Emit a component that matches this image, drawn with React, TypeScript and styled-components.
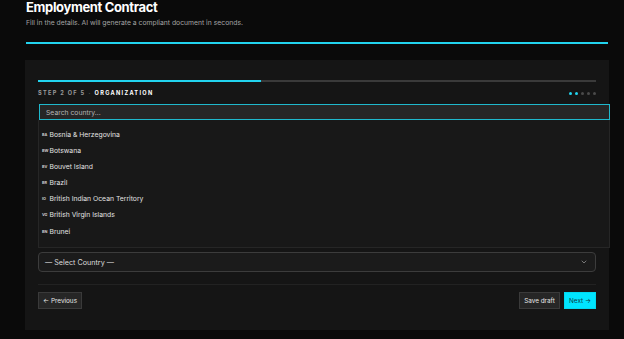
import React from "react";
import styled, { createGlobalStyle } from "styled-components";

const Global = createGlobalStyle`
  html, body { margin: 0; padding: 0; background: #0a0a0a; }
  body { font-family: Inter, "Noto Sans", sans-serif; color: #f2f2f2; }
  * { box-sizing: border-box; }
`;

const Page = styled.div`
  min-height: 339px;
  padding: 0 16px 10px 26px;
  display: flex;
  flex-direction: column;
`;

const Title = styled.h1`
  margin: 0;
  font-size: 13px;
  line-height: 15px;
  font-weight: 700;
  letter-spacing: -0.35px;
  color: #ffffff;
`;

const Subtitle = styled.p`
  margin: 3px 0 0;
  font-size: 6.8px;
  line-height: 9px;
  color: #a3a3a3;
`;

const AccentRule = styled.div`
  margin-top: 15px;
  height: 2px;
  background: #22d3ee;
`;

const Card = styled.section`
  margin: 16px -1px 0;
  background: #151515;
  padding: 20px 13px 21px;
  display: flex;
  flex-direction: column;
`;

const Track = styled.div`
  height: 2px;
  background: #3a3a3a;
  display: flex;
`;

const Fill = styled.div`
  background: #22d3ee;
  height: 100%;
`;

const StepRow = styled.div`
  margin-top: 7px;
  height: 8px;
  display: flex;
  align-items: center;
  justify-content: space-between;
`;

const StepLabel = styled.div`
  font-size: 5.6px;
  font-weight: 700;
  letter-spacing: 1.3px;
  color: #9a9a9a;
  display: flex;
  gap: 3px;
`;

const Strong = styled.span`
  color: #ffffff;
`;

const Dim = styled.span`
  color: #555;
`;

const Dots = styled.div`
  display: flex;
  gap: 3px;
  padding-right: 0.5px;
`;

const Dot = styled.span<{ $on: boolean }>`
  width: 3px;
  height: 3px;
  border-radius: 50%;
  background: ${(p) => (p.$on ? "#22d3ee" : "#4a4a4a")};
`;

const Combo = styled.div`
  margin-top: 7px;
  margin-right: -14px;
  display: flex;
  flex-direction: column;
`;

const Search = styled.input`
  margin-left: 1px;
  height: 16px;
  border: 1px solid #1fb8cc;
  background: #262626;
  color: #eee;
  font-family: inherit;
  font-size: 6.8px;
  padding: 0 6px;
  outline: none;
  &::placeholder { color: #b5b5b5; }
`;

const List = styled.ul`
  list-style: none;
  margin: 0;
  padding: 6px 0 8px;
  background: #181818;
  border: 1px solid #262626;
  border-top: none;
  display: flex;
  flex-direction: column;
`;

const Item = styled.li`
  height: 16.17px;
  display: flex;
  align-items: center;
  gap: 2px;
  padding-left: 3px;
  font-size: 6.8px;
  color: #e2e2e2;
`;

const Code = styled.span`
  font-size: 3.8px;
  font-weight: 700;
  color: #cfcfcf;
  width: 5.5px;
  white-space: nowrap;
  letter-spacing: -0.1px;
`;

const Select = styled.div`
  margin-top: 4px;
  height: 20px;
  border: 1px solid #3c3c3c;
  border-radius: 4px;
  background: #1b1b1b;
  display: flex;
  align-items: center;
  justify-content: space-between;
  padding: 0 7px 0 6px;
  font-size: 7.2px;
  color: #dcdcdc;
`;

const Chevron = styled.svg`
  width: 8px;
  height: 8px;
  color: #8a8a8a;
`;

const Divider = styled.hr`
  margin: 12px 0 0;
  border: none;
  height: 1px;
  background: #222;
`;

const Footer = styled.div`
  margin-top: 7px;
  display: flex;
  align-items: center;
  gap: 4px;
`;

const Spacer = styled.div`
  flex: 1;
`;

const Btn = styled.button<{ $primary?: boolean; $w: number }>`
  width: ${(p) => p.$w}px;
  height: 17px;
  padding: 0;
  font-family: inherit;
  font-size: 6.4px;
  border: 1px solid ${(p) => (p.$primary ? "#00d9f0" : "#3a3a3a")};
  background: ${(p) => (p.$primary ? "#00e5ff" : "#262626")};
  color: ${(p) => (p.$primary ? "#0b3a44" : "#e6e6e6")};
  display: flex;
  align-items: center;
  justify-content: center;
`;

const countries: [string, string][] = [
  ["BA", "Bosnia & Herzegovina"],
  ["BW", "Botswana"],
  ["BV", "Bouvet Island"],
  ["BR", "Brazil"],
  ["IO", "British Indian Ocean Territory"],
  ["VG", "British Virgin Islands"],
  ["BN", "Brunei"],
];

export default function App() {
  return (
    <>
      <Global />
      <Page>
        <Title>Employment Contract</Title>
        <Subtitle>Fill in the details. AI will generate a compliant document in seconds.</Subtitle>
        <AccentRule />
        <Card>
          <Track>
            <Fill style={{ width: `${(2 / 5) * 100}%` }} />
          </Track>
          <StepRow>
            <StepLabel>
              <span>STEP 2 OF 5</span>
              <Dim>·</Dim>
              <Strong>ORGANIZATION</Strong>
            </StepLabel>
            <Dots>
              {[0, 1, 2, 3, 4].map((i) => (
                <Dot key={i} $on={i < 2} />
              ))}
            </Dots>
          </StepRow>
          <Combo>
            <Search placeholder="Search country..." readOnly />
            <List>
              {countries.map(([c, n]) => (
                <Item key={c}>
                  <Code>{c}</Code>
                  {n}
                </Item>
              ))}
            </List>
          </Combo>
          <Select>
            <span>— Select Country —</span>
            <Chevron viewBox="0 0 24 24" fill="none" stroke="currentColor" strokeWidth="2.5" strokeLinecap="round" strokeLinejoin="round">
              <path d="m6 9 6 6 6-6" />
            </Chevron>
          </Select>
          <Divider />
          <Footer>
            <Btn $w={44}>← Previous</Btn>
            <Spacer />
            <Btn $w={41}>Save draft</Btn>
            <Btn $w={32} $primary>Next →</Btn>
          </Footer>
        </Card>
      </Page>
    </>
  );
}
